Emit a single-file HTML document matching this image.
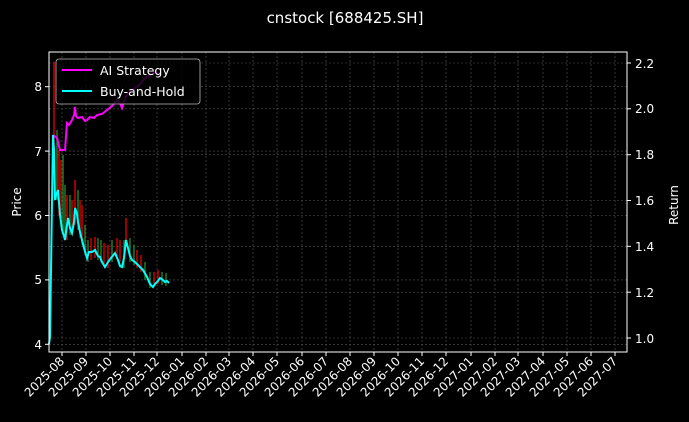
<!DOCTYPE html>
<html><head><meta charset="utf-8"><style>
html,body{margin:0;padding:0;background:#000;}
svg{display:block;font-family:"DejaVu Sans","Liberation Sans",sans-serif;}
</style></head><body>
<svg width="689" height="422" viewBox="0 0 689 422" xmlns="http://www.w3.org/2000/svg">
<rect width="689" height="422" fill="#000"/>
<text x="345" y="23" fill="#fff" font-size="15" text-anchor="middle">cnstock [688425.SH]</text>
<g stroke="#555" stroke-width="0.6" stroke-dasharray="2,2">
<line x1="49" x2="627" y1="344.3" y2="344.3"/><line x1="49" x2="627" y1="279.9" y2="279.9"/><line x1="49" x2="627" y1="215.5" y2="215.5"/><line x1="49" x2="627" y1="151.1" y2="151.1"/><line x1="49" x2="627" y1="86.7" y2="86.7"/>
<line x1="49" x2="627" y1="338" y2="338"/><line x1="49" x2="627" y1="292.2" y2="292.2"/><line x1="49" x2="627" y1="246.3" y2="246.3"/><line x1="49" x2="627" y1="200.5" y2="200.5"/><line x1="49" x2="627" y1="154.7" y2="154.7"/><line x1="49" x2="627" y1="108.8" y2="108.8"/><line x1="49" x2="627" y1="63" y2="63"/>
<line x1="62" x2="62" y1="52" y2="352"/><line x1="86" x2="86" y1="52" y2="352"/><line x1="110" x2="110" y1="52" y2="352"/><line x1="134" x2="134" y1="52" y2="352"/><line x1="157" x2="157" y1="52" y2="352"/><line x1="182" x2="182" y1="52" y2="352"/><line x1="206" x2="206" y1="52" y2="352"/><line x1="229" x2="229" y1="52" y2="352"/><line x1="253" x2="253" y1="52" y2="352"/><line x1="277" x2="277" y1="52" y2="352"/><line x1="302" x2="302" y1="52" y2="352"/><line x1="326" x2="326" y1="52" y2="352"/><line x1="350" x2="350" y1="52" y2="352"/><line x1="374" x2="374" y1="52" y2="352"/><line x1="398" x2="398" y1="52" y2="352"/><line x1="422" x2="422" y1="52" y2="352"/><line x1="446" x2="446" y1="52" y2="352"/><line x1="471" x2="471" y1="52" y2="352"/><line x1="495" x2="495" y1="52" y2="352"/><line x1="518" x2="518" y1="52" y2="352"/><line x1="543" x2="543" y1="52" y2="352"/><line x1="567" x2="567" y1="52" y2="352"/><line x1="591" x2="591" y1="52" y2="352"/><line x1="615" x2="615" y1="52" y2="352"/>
</g>
<g stroke-width="1.3">
<line x1="54" y1="62" x2="54" y2="150" stroke="#e00"/><line x1="57" y1="130" x2="57" y2="200" stroke="#2a8a2a"/><line x1="59" y1="150" x2="59" y2="215" stroke="#e00"/><line x1="61" y1="160" x2="61" y2="220" stroke="#e00"/><line x1="63" y1="155" x2="63" y2="235" stroke="#2a8a2a"/><line x1="65" y1="185" x2="65" y2="235" stroke="#2a8a2a"/><line x1="67" y1="195" x2="67" y2="240" stroke="#e00"/><line x1="70" y1="195" x2="70" y2="235" stroke="#2a8a2a"/><line x1="72" y1="200" x2="72" y2="235" stroke="#e00"/><line x1="75" y1="180" x2="75" y2="225" stroke="#e00"/><line x1="78" y1="190" x2="78" y2="230" stroke="#2a8a2a"/><line x1="80" y1="200" x2="80" y2="238" stroke="#e00"/><line x1="82" y1="205" x2="82" y2="245" stroke="#e00"/><line x1="85" y1="225" x2="85" y2="255" stroke="#2a8a2a"/><line x1="88" y1="240" x2="88" y2="262" stroke="#2a8a2a"/><line x1="91" y1="238" x2="91" y2="260" stroke="#e00"/><line x1="95" y1="237" x2="95" y2="258" stroke="#e00"/><line x1="98" y1="238" x2="98" y2="260" stroke="#2a8a2a"/><line x1="101" y1="240" x2="101" y2="262" stroke="#2a8a2a"/><line x1="104" y1="243" x2="104" y2="265" stroke="#e00"/><line x1="108" y1="245" x2="108" y2="268" stroke="#e00"/><line x1="112" y1="240" x2="112" y2="262" stroke="#2a8a2a"/><line x1="117" y1="238" x2="117" y2="258" stroke="#e00"/><line x1="120" y1="240" x2="120" y2="262" stroke="#e00"/><line x1="124" y1="240" x2="124" y2="268" stroke="#2a8a2a"/><line x1="126" y1="218" x2="126" y2="245" stroke="#e00"/><line x1="130" y1="238" x2="130" y2="262" stroke="#2a8a2a"/><line x1="134" y1="245" x2="134" y2="265" stroke="#2a8a2a"/><line x1="137" y1="250" x2="137" y2="268" stroke="#e00"/><line x1="141" y1="255" x2="141" y2="272" stroke="#e00"/><line x1="145" y1="262" x2="145" y2="280" stroke="#2a8a2a"/><line x1="150" y1="272" x2="150" y2="288" stroke="#2a8a2a"/><line x1="154" y1="272" x2="154" y2="286" stroke="#e00"/><line x1="158" y1="270" x2="158" y2="284" stroke="#e00"/><line x1="162" y1="272" x2="162" y2="285" stroke="#2a8a2a"/><line x1="166" y1="273" x2="166" y2="286" stroke="#2a8a2a"/>
</g>
<polyline fill="none" stroke="#f0f" stroke-width="2" points="53,135 57,138 60,150 65,150 67,123 69,125 72,120 74,115 75,107 76,116 78,118 82,117 85,121 87,120 90,117 94,118 97,115 102,114 107,110 112,106 117,100 120,103 122,108 125,98 130,92 135,88 140,84 145,78 150,75 155,72 162,75"/>
<polyline fill="none" stroke="#0ff" stroke-width="2" points="49,344 50,337 53,135 54,150 55,200 56,195 58,190 60,215 62,230 64,236 65,240 66,232 68,218 70,228 72,233 74,222 75,208 77,214 78,222 80,232 82,240 84,248 87,258 89,252 92,252 95,250 98,256 100,257 102,262 105,267 108,262 111,258 115,253 118,260 120,266 122,267 124,258 126,240 128,248 130,256 132,260 135,262 138,265 140,267 143,270 147,277 150,284 153,287 155,284 158,281 160,278 163,280 165,282 167,281 169,283"/>
<rect x="49" y="52" width="578" height="300" fill="none" stroke="#fff" stroke-width="1"/>
<rect x="56" y="59" width="144" height="45" rx="3" fill="#000" fill-opacity="0.8" stroke="#bbb" stroke-width="0.8"/>
<line x1="62" x2="92" y1="70" y2="70" stroke="#f0f" stroke-width="2"/>
<line x1="62" x2="92" y1="91" y2="91" stroke="#0ff" stroke-width="2"/>
<text x="100" y="75" fill="#fff" font-size="12.5">AI Strategy</text>
<text x="100" y="96" fill="#fff" font-size="12.5">Buy-and-Hold</text>
<g stroke="#fff" stroke-width="1">
<line x1="45" x2="49" y1="344.3" y2="344.3"/><line x1="45" x2="49" y1="279.9" y2="279.9"/><line x1="45" x2="49" y1="215.5" y2="215.5"/><line x1="45" x2="49" y1="151.1" y2="151.1"/><line x1="45" x2="49" y1="86.7" y2="86.7"/>
<line x1="627" x2="631" y1="338" y2="338"/><line x1="627" x2="631" y1="292.2" y2="292.2"/><line x1="627" x2="631" y1="246.3" y2="246.3"/><line x1="627" x2="631" y1="200.5" y2="200.5"/><line x1="627" x2="631" y1="154.7" y2="154.7"/><line x1="627" x2="631" y1="108.8" y2="108.8"/><line x1="627" x2="631" y1="63" y2="63"/>
</g>
<g fill="#fff" font-size="12" text-anchor="end">
<text x="42" y="349">4</text><text x="42" y="284">5</text><text x="42" y="220">6</text><text x="42" y="156">7</text><text x="42" y="91">8</text>
</g>
<g fill="#fff" font-size="12">
<text x="635" y="343">1.0</text><text x="635" y="297">1.2</text><text x="635" y="251">1.4</text><text x="635" y="205">1.6</text><text x="635" y="159">1.8</text><text x="635" y="113">2.0</text><text x="635" y="68">2.2</text>
</g>
<text transform="translate(21,202) rotate(-90)" fill="#fff" font-size="12" text-anchor="middle">Price</text>
<text transform="translate(678,205) rotate(-90)" fill="#fff" font-size="12" text-anchor="middle">Return</text>
<g stroke="#fff" stroke-width="1">
<line x1="62" x2="62" y1="352" y2="356"/><line x1="86" x2="86" y1="352" y2="356"/><line x1="110" x2="110" y1="352" y2="356"/><line x1="134" x2="134" y1="352" y2="356"/><line x1="157" x2="157" y1="352" y2="356"/><line x1="182" x2="182" y1="352" y2="356"/><line x1="206" x2="206" y1="352" y2="356"/><line x1="229" x2="229" y1="352" y2="356"/><line x1="253" x2="253" y1="352" y2="356"/><line x1="277" x2="277" y1="352" y2="356"/><line x1="302" x2="302" y1="352" y2="356"/><line x1="326" x2="326" y1="352" y2="356"/><line x1="350" x2="350" y1="352" y2="356"/><line x1="374" x2="374" y1="352" y2="356"/><line x1="398" x2="398" y1="352" y2="356"/><line x1="422" x2="422" y1="352" y2="356"/><line x1="446" x2="446" y1="352" y2="356"/><line x1="471" x2="471" y1="352" y2="356"/><line x1="495" x2="495" y1="352" y2="356"/><line x1="518" x2="518" y1="352" y2="356"/><line x1="543" x2="543" y1="352" y2="356"/><line x1="567" x2="567" y1="352" y2="356"/><line x1="591" x2="591" y1="352" y2="356"/><line x1="615" x2="615" y1="352" y2="356"/>
</g>
<g fill="#fff" font-size="12" text-anchor="end">
<text transform="translate(65,362) rotate(-45)">2025-08</text>
<text transform="translate(89,362) rotate(-45)">2025-09</text>
<text transform="translate(113,362) rotate(-45)">2025-10</text>
<text transform="translate(137,362) rotate(-45)">2025-11</text>
<text transform="translate(160,362) rotate(-45)">2025-12</text>
<text transform="translate(185,362) rotate(-45)">2026-01</text>
<text transform="translate(209,362) rotate(-45)">2026-02</text>
<text transform="translate(232,362) rotate(-45)">2026-03</text>
<text transform="translate(256,362) rotate(-45)">2026-04</text>
<text transform="translate(280,362) rotate(-45)">2026-05</text>
<text transform="translate(305,362) rotate(-45)">2026-06</text>
<text transform="translate(329,362) rotate(-45)">2026-07</text>
<text transform="translate(353,362) rotate(-45)">2026-08</text>
<text transform="translate(377,362) rotate(-45)">2026-09</text>
<text transform="translate(401,362) rotate(-45)">2026-10</text>
<text transform="translate(425,362) rotate(-45)">2026-11</text>
<text transform="translate(449,362) rotate(-45)">2026-12</text>
<text transform="translate(474,362) rotate(-45)">2027-01</text>
<text transform="translate(498,362) rotate(-45)">2027-02</text>
<text transform="translate(521,362) rotate(-45)">2027-03</text>
<text transform="translate(546,362) rotate(-45)">2027-04</text>
<text transform="translate(570,362) rotate(-45)">2027-05</text>
<text transform="translate(594,362) rotate(-45)">2027-06</text>
<text transform="translate(618,362) rotate(-45)">2027-07</text>
</g>
</svg>
</body></html>
